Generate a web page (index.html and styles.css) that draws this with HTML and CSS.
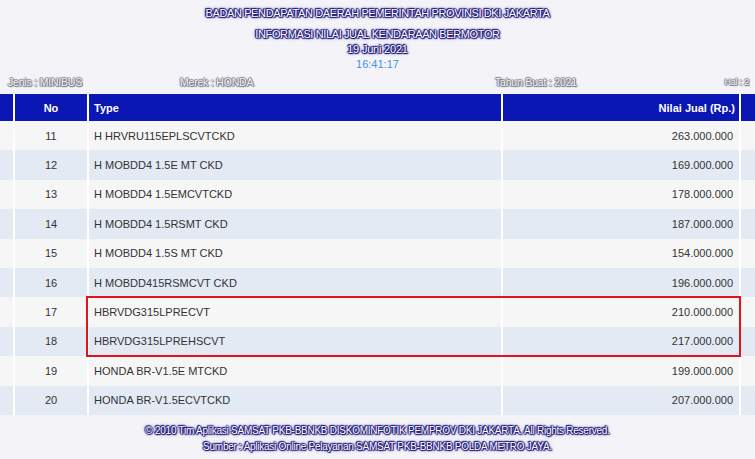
FILE: index.html
```html
<!DOCTYPE html>
<html lang="id">
<head>
<meta charset="utf-8">
<title>Informasi Nilai Jual Kendaraan Bermotor</title>
<link rel="stylesheet" href="styles.css">
</head>
<body>
<div class="page">
  <header class="head">
    <div class="title outline">BADAN PENDAPATAN DAERAH PEMERINTAH PROVINSI DKI JAKARTA</div>
    <div class="subtitle outline">INFORMASI NILAI JUAL KENDARAAN BERMOTOR</div>
    <div class="date outline">19 Juni 2021</div>
    <div class="time">16:41:17</div>
  </header>
  <div class="info">
    <span class="info-jenis soft">Jenis : MINIBUS</span>
    <span class="info-merek soft">Merek : HONDA</span>
    <span class="info-tahun soft">Tahun Buat : 2021</span>
    <span class="info-hal soft">Hal : 2</span>
  </div>
  <div class="table-wrap">
    <div class="grid">
      <div class="th"></div><div class="th c">No</div><div class="th l">Type</div><div class="th r">Nilai Jual (Rp.)</div><div class="th"></div>

      <div class="td odd"></div><div class="td odd c">11</div><div class="td odd l">H HRVRU115EPLSCVTCKD</div><div class="td odd r">263.000.000</div><div class="td odd"></div>
      <div class="td even"></div><div class="td even c">12</div><div class="td even l">H MOBDD4 1.5E MT CKD</div><div class="td even r">169.000.000</div><div class="td even"></div>
      <div class="td odd"></div><div class="td odd c">13</div><div class="td odd l">H MOBDD4 1.5EMCVTCKD</div><div class="td odd r">178.000.000</div><div class="td odd"></div>
      <div class="td even"></div><div class="td even c">14</div><div class="td even l">H MOBDD4 1.5RSMT CKD</div><div class="td even r">187.000.000</div><div class="td even"></div>
      <div class="td odd"></div><div class="td odd c">15</div><div class="td odd l">H MOBDD4 1.5S MT CKD</div><div class="td odd r">154.000.000</div><div class="td odd"></div>
      <div class="td even"></div><div class="td even c">16</div><div class="td even l">H MOBDD415RSMCVT CKD</div><div class="td even r">196.000.000</div><div class="td even"></div>
      <div class="td odd"></div><div class="td odd c">17</div><div class="td odd l">HBRVDG315LPRECVT</div><div class="td odd r">210.000.000</div><div class="td odd"></div>
      <div class="td even"></div><div class="td even c">18</div><div class="td even l">HBRVDG315LPREHSCVT</div><div class="td even r">217.000.000</div><div class="td even"></div>
      <div class="td odd"></div><div class="td odd c">19</div><div class="td odd l">HONDA BR-V1.5E MTCKD</div><div class="td odd r">199.000.000</div><div class="td odd"></div>
      <div class="td even"></div><div class="td even c">20</div><div class="td even l">HONDA BR-V1.5ECVTCKD</div><div class="td even r">207.000.000</div><div class="td even"></div>
    </div>
    <div class="highlight"></div>
  </div>
  <footer class="foot">
    <div class="outline">© 2010 Tim Aplikasi SAMSAT PKB-BBNKB DISKOMINFOTIK PEMPROV DKI JAKARTA. All Rights Reserved.</div>
    <div class="outline">Sumber : Aplikasi Online Pelayanan SAMSAT PKB-BBNKB POLDA METRO JAYA.</div>
  </footer>
</div>
</body>
</html>
```

FILE: styles.css
```css
html, body {
  margin: 0;
  padding: 0;
}
body {
  background: #f4f4f8;
  font-family: "Liberation Sans", Arial, sans-serif;
  color: #333;
  overflow: hidden;
}
.page {
  width: 755px;
  height: 459px;
  display: flex;
  flex-direction: column;
}
.head {
  text-align: center;
  display: flex;
  flex-direction: column;
  align-items: center;
}
.outline {
  color: #ffffff;
  text-shadow:
    -1px 0 1px #221a78,
    1px 0 1px #221a78,
    0 -1px 1px #221a78,
    0 1px 1px #221a78,
    1px 1px 1px #221a78,
    -1px -1px 1px #221a78,
    0 0 4px #6a60c0;
}
.soft {
  color: #f4f4f4;
  text-shadow:
    -1px 0 1px #7c7c8c,
    1px 0 1px #7c7c8c,
    0 -1px 1px #7c7c8c,
    0 1px 1px #7c7c8c,
    1px 1px 1px #7c7c8c;
}
.title {
  font-size: 11px;
  line-height: 14px;
  letter-spacing: -0.38px;
  margin-top: 6px;
}
.subtitle {
  font-size: 11px;
  line-height: 14px;
  letter-spacing: -0.38px;
  margin-top: 7px;
}
.date {
  font-size: 11px;
  line-height: 14px;
  letter-spacing: -0.2px;
  margin-top: 1px;
}
.time {
  font-size: 11px;
  line-height: 14px;
  color: #3d93e4;
  margin-top: 1px;
}
.info {
  display: grid;
  grid-template-columns: 172px 315px 222px 1fr;
  padding-left: 8px;
  margin-top: 4px;
  font-size: 10.5px;
  line-height: 14px;
  letter-spacing: -0.2px;
}
.info-hal {
  font-size: 9px;
  text-align: right;
  padding-right: 6px;
}
.table-wrap {
  position: relative;
  margin-top: 5px;
}
.grid {
  display: grid;
  grid-template-columns: 13px 72px 412px 236px 1fr;
  grid-template-rows: 27px;
  grid-auto-rows: 29.4px;
  column-gap: 2px;
  background: #ffffff;
  font-size: 11px;
}
.th {
  background: #0a17b4;
  color: #ffffff;
  font-weight: bold;
  display: flex;
  align-items: center;
}
.td {
  display: flex;
  align-items: center;
  color: #333;
}
.odd { background: #f6f6f6; }
.even { background: #e3eaf4; }
.c { justify-content: center; }
.l { padding-left: 5px; }
.r { justify-content: flex-end; padding-right: 6px; }
.th.r { padding-right: 4px; }
.highlight {
  position: absolute;
  left: 86px;
  top: 202px;
  width: 655px;
  height: 61px;
  box-sizing: border-box;
  border: 2px solid #e0141c;
}
.foot {
  margin-top: 9px;
  text-align: center;
  font-size: 10px;
  line-height: 14px;
  letter-spacing: -0.25px;
  display: flex;
  flex-direction: column;
  gap: 2px;
}
```
